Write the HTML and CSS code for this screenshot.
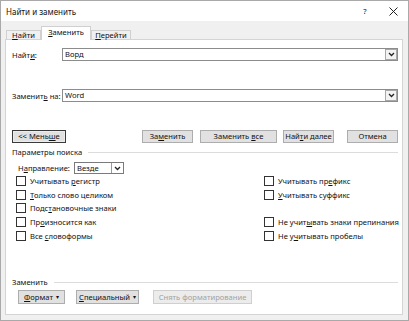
FILE: index.html
```html
<!DOCTYPE html>
<html lang="ru">
<head>
<meta charset="utf-8">
<title>Найти и заменить</title>
<link rel="stylesheet" href="styles.css">
</head>
<body>
<div class="window">
  <div class="titlebar">
    <span class="title">Найти и заменить</span>
    <span class="help">?</span>
    <span class="close"><svg width="9" height="9" viewBox="0 0 9 9"><path d="M0.5 0.5L8.5 8.5M8.5 0.5L0.5 8.5" stroke="#222" stroke-width="1"/></svg></span>
  </div>
  <div class="tabs">
    <div class="tab tab-find"><span><u>Н</u>айти</span></div>
    <div class="tab tab-replace active"><span><u>З</u>аменить</span></div>
    <div class="tab tab-goto"><span><u>П</u>ерейти</span></div>
  </div>
  <div class="panel">
    <div class="field field-find">
      <span class="label">Найт<u>и</u>:</span>
      <div class="combo"><span class="value">Ворд</span><span class="drop"><svg width="7" height="5" viewBox="0 0 7 5"><path d="M1 1L3.5 3.5L6 1" fill="none" stroke="#222" stroke-width="1.3"/></svg></span></div>
    </div>
    <div class="field field-replace">
      <span class="label">Заменит<u>ь</u> на:</span>
      <div class="combo"><span class="value">Word</span><span class="drop"><svg width="7" height="5" viewBox="0 0 7 5"><path d="M1 1L3.5 3.5L6 1" fill="none" stroke="#222" stroke-width="1.3"/></svg></span></div>
    </div>
    <div class="btnrow">
      <div class="btn btn-less"><span>&lt;&lt; Мень<u>ш</u>е</span></div>
      <div class="spacer"></div>
      <div class="btn btn-replace"><span>За<u>м</u>енить</span></div>
      <div class="btn btn-all"><span>Заменить <u>в</u>се</span></div>
      <div class="btn btn-next"><span>Най<u>т</u>и далее</span></div>
      <div class="btn btn-cancel"><span>Отмена</span></div>
    </div>
    <div class="group-head group-search"><span>Параметры поиска</span><span class="rule"></span></div>
    <div class="dir">
      <span class="label">Н<u>а</u>правление:</span>
      <div class="select"><span class="value">Везде</span><span class="drop"><svg width="7" height="5" viewBox="0 0 7 5"><path d="M1 1L3.5 3.5L6 1" fill="none" stroke="#222" stroke-width="1.3"/></svg></span></div>
    </div>
    <div class="opts">
      <div class="opt"><span class="box"></span><span>Учитывать <u>р</u>егистр</span></div>
      <div class="opt"><span class="box"></span><span>Учитывать пр<u>е</u>фикс</span></div>
      <div class="opt"><span class="box"></span><span><u>Т</u>олько слово целиком</span></div>
      <div class="opt"><span class="box"></span><span><u>У</u>читывать суффикс</span></div>
      <div class="opt"><span class="box"></span><span>Подс<u>т</u>ановочные знаки</span></div>
      <div class="opt empty"></div>
      <div class="opt"><span class="box"></span><span>Пр<u>о</u>износится как</span></div>
      <div class="opt"><span class="box"></span><span>Не учит<u>ы</u>вать знаки препинания</span></div>
      <div class="opt"><span class="box"></span><span>Все <u>с</u>ловоформы</span></div>
      <div class="opt"><span class="box"></span><span>Не у<u>ч</u>итывать пробелы</span></div>
    </div>
    <div class="grow"></div>
    <div class="group-head group-replace"><span>Заменить</span><span class="rule"></span></div>
    <div class="btnrow2">
      <div class="btn btn-format"><span><u>Ф</u>ормат</span><span class="tri">▾</span></div>
      <div class="btn btn-special"><span><u>С</u>пециальный</span><span class="tri">▾</span></div>
      <div class="btn btn-clear disabled"><span>Снять форматирование</span></div>
    </div>
  </div>
</div>
</body>
</html>
```

FILE: styles.css
```css
* { box-sizing: border-box; }
html, body { margin: 0; padding: 0; }
body {
  width: 409px;
  height: 321px;
  overflow: hidden;
  font-family: "Noto Sans", "Segoe UI", sans-serif;
  font-size: 7.6px;
  color: #111;
  background: #fff;
}
u { text-decoration: underline; text-underline-offset: 1px; }
.window {
  width: 409px;
  height: 321px;
  border: 1px solid #a9a9a9;
  background: #f0f0f0;
  display: flex;
  flex-direction: column;
}
.titlebar {
  height: 20px;
  background: #fff;
  display: flex;
  align-items: center;
  padding-left: 5px;
  flex: none;
}
.title { font-size: 8px; flex: 1; color: #111; }
.help { font-size: 7.6px; width: 30px; text-align: center; margin-right: 0; }
.close { width: 26px; display: flex; justify-content: center; margin-right: 2px; }
.tabs {
  display: flex;
  padding-left: 5px;
  height: 13px;
  margin-top: 5px;
  align-items: flex-end;
  flex: none;
  position: relative;
  z-index: 1;
}
.tab {
  height: 9px;
  border: 1px solid #d0d0d0;
  border-bottom: none;
  background: #f0f0f0;
  display: flex;
  justify-content: center;
  line-height: 8px;
  white-space: nowrap;
}
.tab-find { width: 35px; }
.tab-replace { width: 50px; }
.tab-goto { width: 40px; }
.tab.active {
  height: 14px;
  background: #fff;
  line-height: 9px;
  padding-top: 1px;
  margin-bottom: -1px;
}
.panel {
  flex: 1;
  margin: 0 5px 5px 4px;
  border: 1px solid #d4d4d4;
  background: #fff;
  display: flex;
  flex-direction: column;
  padding: 0 4px 10px 6px;
}
.field { display: flex; align-items: center; height: 13px; }
.field-find { margin-top: 8px; }
.field-replace { margin-top: 28px; }
.field .label { width: 50px; flex: none; white-space: nowrap; }
.combo {
  flex: 1;
  height: 13px;
  border: 1px solid #8c8c8c;
  display: flex;
  align-items: center;
  background: #fff;
}
.value { flex: 1; padding-left: 2px; line-height: 11px; }
.drop {
  width: 12px;
  height: 11px;
  border: 1px solid #a8a8a8;
  display: flex;
  align-items: center;
  justify-content: center;
  background: #f3f3f3;
}
.btnrow { display: flex; margin-top: 28px; height: 13px; }
.spacer { flex: 1; }
.btn {
  height: 13px;
  border: 1px solid #adadad;
  background: #e1e1e1;
  display: flex;
  align-items: center;
  justify-content: center;
  line-height: 11px;
  white-space: nowrap;
  flex: none;
}
.btn-less {
  width: 54px;
  border: 1px solid #3a3a3a;
  box-shadow: inset 0 0 0 1px #ececec;
}
.btn-replace { width: 51px; }
.btn-all { width: 77px; margin-left: 7px; }
.btn-next { width: 51px; margin-left: 6px; }
.btn-cancel { width: 51px; margin-left: 13px; }
.group-head {
  display: flex;
  align-items: center;
  height: 12px;
  white-space: nowrap;
}
.group-search { margin-top: 3px; }
.rule { flex: 1; height: 1px; background: #dcdcdc; margin-left: 6px; margin-top: 1px; }
.dir { display: flex; align-items: center; height: 12px; margin-top: 4px; padding-left: 6px; }
.dir .label { width: 56px; flex: none; white-space: nowrap; }
.select {
  width: 50px;
  height: 12px;
  border: 1px solid #7a7a7a;
  display: flex;
  align-items: center;
}
.select .drop { height: 10px; width: 12px; border: none; border-left: 1px solid #9a9a9a; background: #fff; }
.opts {
  display: grid;
  grid-template-columns: 248px 1fr;
  grid-auto-rows: 13.75px;
  padding-left: 4px;
}
.opt { display: flex; align-items: center; white-space: nowrap; }
.box {
  width: 10px;
  height: 10px;
  border: 1px solid #333;
  background: #fff;
  margin-right: 4px;
  flex: none;
}
.grow { flex: 1; }
.group-replace { margin-bottom: 2px; }
.btnrow2 { display: flex; height: 14px; padding-left: 6px; }
.btnrow2 .btn { height: 14px; }
.tri { font-size: 6px; margin-left: 3px; }
.btn-format { width: 47px; }
.btn-special { width: 63px; margin-left: 11px; }
.btn-clear { width: 99px; margin-left: 14px; }
.btn.disabled { color: #a2a2a2; background: #ececec; border-color: #cfcfcf; }
```
